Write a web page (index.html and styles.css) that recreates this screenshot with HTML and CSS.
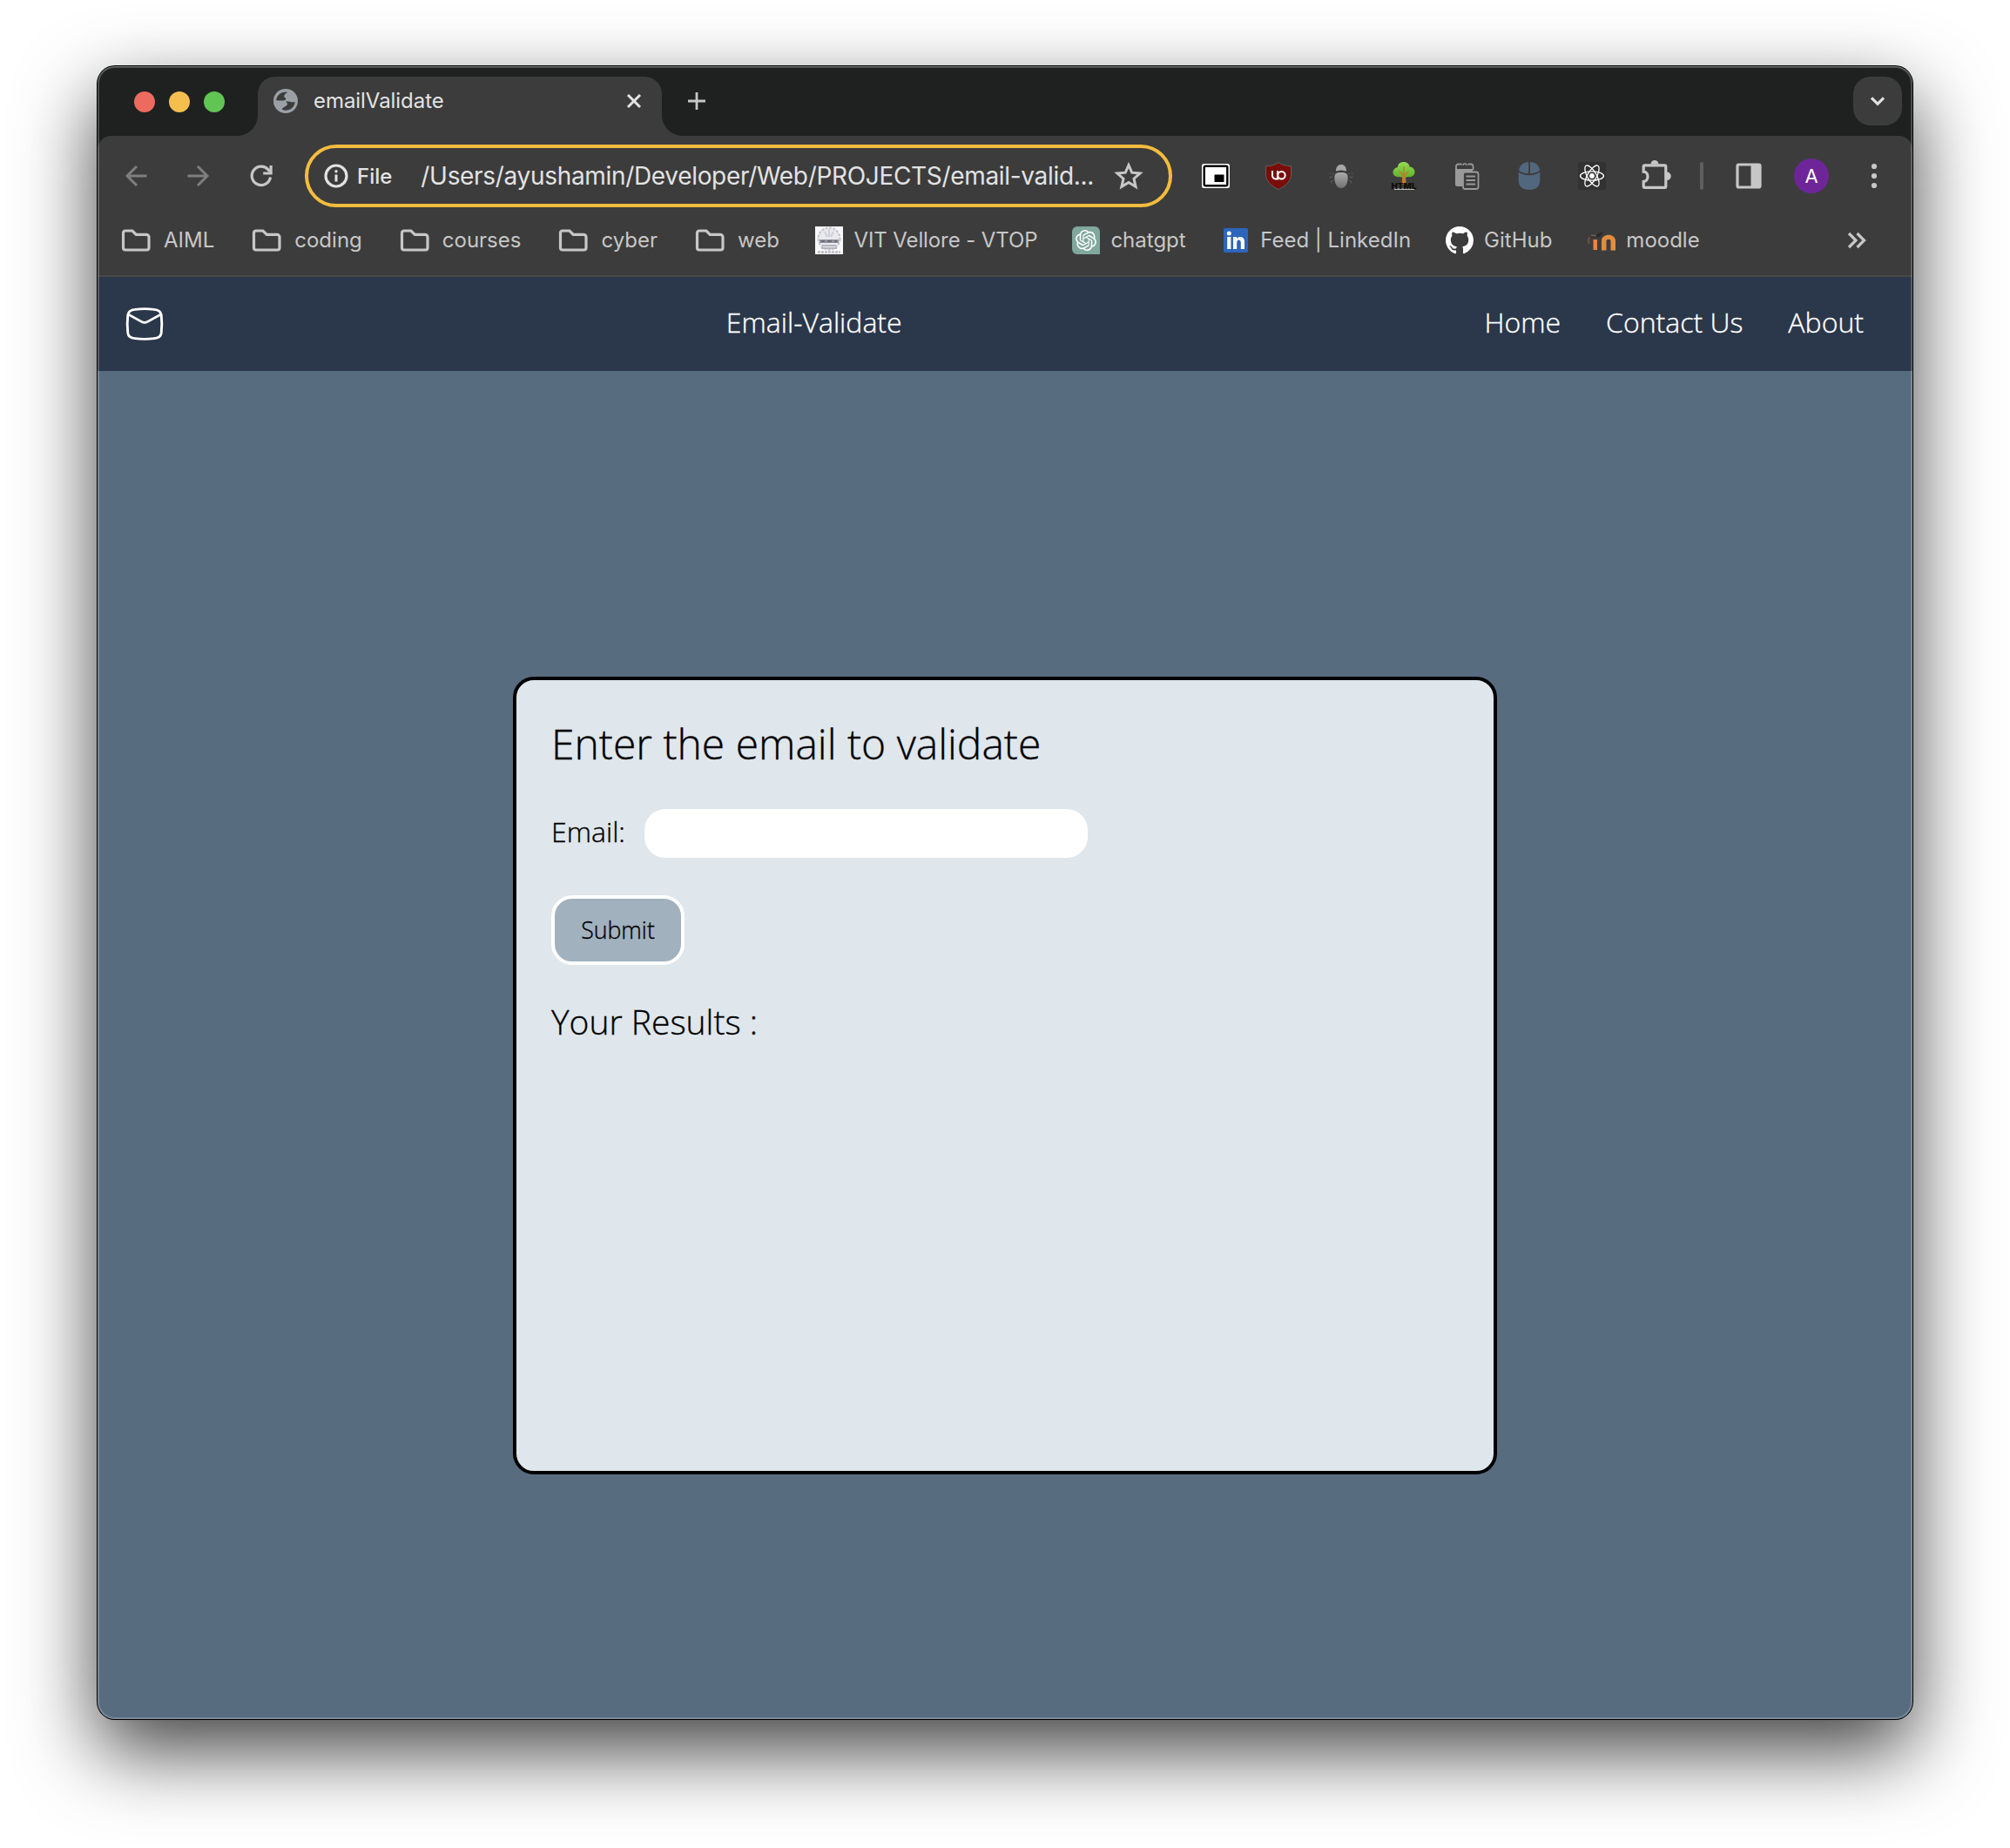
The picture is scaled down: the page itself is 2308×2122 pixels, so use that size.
FILE: index.html
```html
<!DOCTYPE html>
<html lang="en">
<head>
<meta charset="utf-8">
<title>emailValidate</title>
<link rel="stylesheet" href="styles.css">
</head>
<body>
<svg width="0" height="0" class="defs" aria-hidden="true">
  <symbol id="folder" viewBox="0 0 40 32">
    <path d="M8 5h8l4.300 4.300H32a3 3 0 0 1 3 3V24.500a2.500 2.500 0 0 1-2.500 2.500H8a2.500 2.500 0 0 1-2.500-2.500V7.500A2.500 2.500 0 0 1 8 5z" fill="none" stroke="#c7c7c7" stroke-width="3.200"/>
  </symbol>
</svg>
<div class="window">
  <div class="tabstrip">
    <div class="lights"><i class="light red"></i><i class="light yellow"></i><i class="light green"></i></div>
    <div class="tab">
      <svg class="globe" width="28" height="28" viewBox="0 0 28 28"><circle cx="14" cy="14" r="14" fill="#9aa0a6"/><path d="M3.200 13.200C3.600 7.500 8 3.300 15.800 3.400C15.200 5.600 12.200 5.600 12.200 8.500C12.200 10.200 14.200 9.500 14.200 11.500C14.200 13.400 12 13.400 9 13.500Z" fill="#3c3c3c"/><path d="M24.800 15C24 20.800 20 24.800 13.500 24.800C10.500 24.500 10 23.800 10 22.500L13 20.500C16.500 19 17 17 14 14.300L19 14.800C21 15.800 23 15.200 24.800 15Z" fill="#3c3c3c"/></svg>
      <span class="tab-title">emailValidate</span>
      <svg class="tab-close" width="24" height="24" viewBox="0 0 24 24"><path d="M5 5l14 14M19 5L5 19" stroke="#e3e3e3" stroke-width="3"/></svg>
    </div>
    <svg class="new-tab" width="20" height="20" viewBox="0 0 20 20"><path d="M10 0v20M0 10h20" stroke="#c7c7c7" stroke-width="2.800"/></svg>
    <div class="tab-search"><svg width="20" height="20" viewBox="0 0 20 20"><path d="M3 6.300l7 7 7-7" fill="none" stroke="#e3e3e3" stroke-width="3.200"/></svg></div>
  </div>
  <div class="chrome">
    <div class="toolbar">
      <div class="nav">
        <svg width="32" height="32" viewBox="0 0 32 32"><path d="M28.500 16H6M17 5L6 16l11 11" fill="none" stroke="#7e7e7e" stroke-width="3"/></svg>
        <svg width="32" height="32" viewBox="0 0 32 32"><path d="M3.500 16H26M15 5l11 11-11 11" fill="none" stroke="#7e7e7e" stroke-width="3"/></svg>
        <svg width="32" height="32" viewBox="0 0 32 32"><path d="M26.500 17.500A10.700 10.700 0 1 1 23.800 8.600L26 11" fill="none" stroke="#c7c7c7" stroke-width="3.200"/><path d="M28.700 4v10.500H18.200v-3h7.300V4z" fill="#c7c7c7"/></svg>
      </div>
      <div class="omnibox">
        <svg width="28" height="28" viewBox="0 0 28 28"><circle cx="14" cy="14" r="12" fill="none" stroke="#e3e3e3" stroke-width="3.200"/><path d="M14 12.500v8" stroke="#e3e3e3" stroke-width="3"/><circle cx="14" cy="8.800" r="1.700" fill="#e3e3e3"/></svg>
        <span class="scheme">File</span>
        <span class="url">/Users/ayushamin/Developer/Web/PROJECTS/email-valid...</span>
        <svg class="star" width="36" height="36" viewBox="0 0 36 36"><path d="M18 5.500l3.700 8.700 9.400.8-7.100 6.200 2.100 9.200-8.100-4.900-8.100 4.900L12 21.200 4.900 15l9.400-.8z" fill="none" stroke="#c7c7c7" stroke-width="3"/></svg>
      </div>
      <div class="actions">
        <svg width="32" height="32" viewBox="0 0 32 32"><rect x="0" y="2" width="32" height="28" rx="2.500" fill="#fff"/><rect x="2.700" y="4.700" width="26.600" height="22.600" rx="1.500" fill="#fff" stroke="#000" stroke-width="2.400"/><rect x="14.500" y="14.500" width="11" height="8.500" fill="#000"/></svg>
        <svg width="32" height="32" viewBox="0 0 32 32"><path d="M16 .5C12 3.500 6.500 4.800 1.500 4.800V14c0 8 5.500 13 14.500 17.500C25 27 30.500 22 30.500 14V4.800C25.500 4.800 20 3.500 16 .5z" fill="#790d0a" stroke="#6a6a6a" stroke-width=".8"/><path d="M9 10v5.800a3.600 3.600 0 0 0 3.600 3.600h2.400V10" fill="none" stroke="#fff" stroke-width="2"/><circle cx="19.500" cy="15.200" r="4.200" fill="none" stroke="#fff" stroke-width="2"/></svg>
        <svg width="32" height="32" viewBox="0 0 32 32"><defs><linearGradient id="bug" x1="0" y1="0" x2="0" y2="1"><stop offset="0" stop-color="#aaa"/><stop offset="1" stop-color="#737373"/></linearGradient></defs><path d="M8 14l-2-.8M3.500 12.500v1.500M6 17.500H2.500M7 21l-2.500 1.500v2M24 14l2-.8M28.500 12.500v1.500M26 17.500h3.500M25 21l2.500 1.500v2" fill="none" stroke="#595959" stroke-width="1.300"/><path d="M10 10.500C10 5.500 12.500 3 16 3s6 2.500 6 7.500L16 9.500z" fill="#a6a6a6"/><path d="M8.300 18c0-4.500 2.200-6 7.700-6s7.700 1.500 7.700 6c0 6.500-3 12-7.700 12s-7.700-5.500-7.700-12z" fill="url(#bug)"/></svg>
        <svg width="32" height="32" viewBox="0 0 32 32"><defs><linearGradient id="leaf" x1="0" y1="0" x2="0" y2="1"><stop offset="0" stop-color="#93dc52"/><stop offset="1" stop-color="#62b02c"/></linearGradient></defs><path d="M9 6C9 2 12 0 15.500 0 20 0 22.500 2.500 22.500 5.500 26 5.500 28.500 8.500 28.500 11.500c0 4-4 6.500-7.500 5.500-3 1.500-7 1.500-9.500 0C7 18 3.500 15.500 3.500 12c0-3 2.500-5.500 5.500-6z" fill="url(#leaf)"/><path d="M16 5v9M10.500 10.500L16 16l5.500-5.500" fill="none" stroke="#b5822f" stroke-width="1.400"/><path d="M14.700 13h2.800l1.300 13h-5.400z" fill="#c17d2c"/><rect x="5" y="30.500" width="23" height="1.500" fill="#b9b9b9"/><text x="1.500" y="30.700" class="tree-label" textLength="29" lengthAdjust="spacingAndGlyphs">HTML</text></svg>
        <svg width="32" height="32" viewBox="0 0 32 32"><path d="M3 8h20v4H12v16H5.500A2.500 2.500 0 0 1 3 25.500z" fill="#9a9a9a"/><path d="M4 9V5a2.500 2.500 0 0 1 2.500-2.500h4M17.500 2.500H21A2.500 2.500 0 0 1 23.500 5v4" fill="none" stroke="#9a9a9a" stroke-width="1.800"/><path d="M9 7V4.500h3.200a1.900 1.900 0 0 1 3.600 0h2.700V7z" fill="#3c3c3c"/><path d="M12 4a2 2 0 0 1 4 0" fill="none" stroke="#9a9a9a" stroke-width="1.500"/><rect x="12" y="11.500" width="17.500" height="19.500" rx="2.500" fill="#3c3c3c" stroke="#9a9a9a" stroke-width="1.800"/><path d="M15.500 16.500H26M15.500 21H26M15.500 25.500H26" stroke="#9a9a9a" stroke-width="2"/></svg>
        <svg width="32" height="32" viewBox="0 0 32 32"><path d="M15.200 0v13.300C10.500 13.300 6.500 12 4 9.500 5 3.500 9.500.3 15.200 0zM17 0v13.300C21.700 13.300 25.700 12 28.200 9.500 27.200 3.500 22.700.3 17 0zM3.700 11.500C7 14 11 15.200 16 15.200S25 14 28.300 11.500V21c0 7-4.300 11-12.300 11S3.700 28 3.700 21z" fill="#51677d"/></svg>
        <svg width="32" height="32" viewBox="0 0 32 32"><rect width="32" height="32" rx="2.500" fill="#323232"/><g fill="none" stroke="#fff" stroke-width="1.300"><ellipse cx="16" cy="16" rx="13.500" ry="5.200"/><ellipse cx="16" cy="16" rx="13.500" ry="5.200" transform="rotate(60 16 16)"/><ellipse cx="16" cy="16" rx="13.500" ry="5.200" transform="rotate(120 16 16)"/></g><circle cx="16" cy="16" r="2.900" fill="#fff"/></svg>
        <svg width="36" height="36" viewBox="0 0 36 36"><path d="M6.500 5.800h23a1.300 1.300 0 0 1 1.300 1.300v23a1.300 1.300 0 0 1-1.300 1.300h-23a1.300 1.300 0 0 1-1.300-1.300v-5.600c3 0 4.800-2.600 4.800-5.700s-1.800-5.700-4.800-5.700V7.100a1.300 1.300 0 0 1 1.300-1.300z" fill="none" stroke="#c7c7c7" stroke-width="3.200"/><path d="M13.500 4.500a4.500 4.500 0 0 1 9 0zM32 13.500a4.800 4.800 0 0 1 0 9.600z" fill="#c7c7c7"/></svg>
      </div>
      <i class="divider"></i>
      <svg class="side-panel" width="32" height="32" viewBox="0 0 32 32"><rect x="3" y="3" width="26" height="26" rx="1.500" fill="none" stroke="#c7c7c7" stroke-width="3.200"/><path d="M18.500 3H29v26H18.500z" fill="#c7c7c7"/></svg>
      <span class="avatar">A</span>
      <svg class="menu" width="8" height="32" viewBox="0 0 8 32"><g fill="#c7c7c7"><circle cx="4" cy="5" r="3.100"/><circle cx="4" cy="16" r="3.100"/><circle cx="4" cy="27" r="3.100"/></g></svg>
    </div>
    <div class="bookmarks">
      <span class="bookmark"><svg width="40" height="32"><use href="#folder"/></svg>AIML</span>
      <span class="bookmark"><svg width="40" height="32"><use href="#folder"/></svg>coding</span>
      <span class="bookmark"><svg width="40" height="32"><use href="#folder"/></svg>courses</span>
      <span class="bookmark"><svg width="40" height="32"><use href="#folder"/></svg>cyber</span>
      <span class="bookmark"><svg width="40" height="32"><use href="#folder"/></svg>web</span>
      <span class="bookmark vtop"><svg width="32" height="32" viewBox="0 0 32 32"><rect width="32" height="32" fill="#f8f8fa"/><circle cx="16" cy="14" r="12.500" fill="#e9e9ee" stroke="#c3c3cc" stroke-width="2" stroke-dasharray="3 1.500"/><path d="M16 3v9M11 6l3 6M21 6l-3 6" stroke="#d0d0d8" stroke-width="2"/><rect x="5" y="15" width="22" height="4" fill="#92929c"/><path d="M7 17h4M14 17h5M22 17h3" stroke="#6d6d7b" stroke-width="2"/><path d="M8 22h16M7 25h18" stroke="#b5b5c0" stroke-width="2"/><path d="M3 29.500h26" stroke="#c3c3cc" stroke-width="3" stroke-dasharray="3 1"/></svg>VIT Vellore - VTOP</span>
      <span class="bookmark"><svg width="32" height="32" viewBox="0 0 32 32"><path d="M6 0h20a6 6 0 0 1 6 6v26H6a6 6 0 0 1-6-6V6a6 6 0 0 1 6-6z" fill="#80a89d"/><g transform="translate(4 4)"><path fill="#fff" d="M22.2819 9.8211a5.9847 5.9847 0 0 0-.5157-4.9108 6.0462 6.0462 0 0 0-6.5098-2.9A6.0651 6.0651 0 0 0 4.9807 4.1818a5.9847 5.9847 0 0 0-3.9977 2.9 6.0462 6.0462 0 0 0 .7427 7.0966 5.98 5.98 0 0 0 .511 4.9107 6.051 6.051 0 0 0 6.5146 2.9001A5.9847 5.9847 0 0 0 13.2599 24a6.0557 6.0557 0 0 0 5.7718-4.2058 5.9894 5.9894 0 0 0 3.9977-2.9001 6.0557 6.0557 0 0 0-.7475-7.0729zm-9.022 12.6081a4.4755 4.4755 0 0 1-2.8764-1.0408l.1419-.0804 4.7783-2.7582a.7948.7948 0 0 0 .3927-.6813v-6.7369l2.02 1.1686a.071.071 0 0 1 .038.052v5.5826a4.504 4.504 0 0 1-4.4945 4.4944zm-9.6607-4.1254a4.4708 4.4708 0 0 1-.5346-3.0137l.142.0852 4.783 2.7582a.7712.7712 0 0 0 .7806 0l5.8428-3.3685v2.3324a.0804.0804 0 0 1-.0332.0615L9.74 19.9502a4.4992 4.4992 0 0 1-6.1408-1.6464zM2.3408 7.8956a4.485 4.485 0 0 1 2.3655-1.9728V11.6a.7664.7664 0 0 0 .3879.6765l5.8144 3.3543-2.0201 1.1685a.0757.0757 0 0 1-.071 0l-4.8303-2.7865A4.504 4.504 0 0 1 2.3408 7.872zm16.5963 3.8558L13.1038 8.364 15.1192 7.2a.0757.0757 0 0 1 .071 0l4.8303 2.7913a4.4944 4.4944 0 0 1-.6765 8.1042v-5.6772a.79.79 0 0 0-.407-.667zm2.0107-3.0231l-.142-.0852-4.7735-2.7818a.7759.7759 0 0 0-.7854 0L9.409 9.2297V6.8974a.0662.0662 0 0 1 .0284-.0615l4.8303-2.7866a4.4992 4.4992 0 0 1 6.6802 4.66zM8.3065 12.863l-2.02-1.1638a.0804.0804 0 0 1-.038-.0567V6.0742a4.4992 4.4992 0 0 1 7.3757-3.4537l-.142.0805L8.704 5.459a.7948.7948 0 0 0-.3927.6813zm1.0976-2.3654l2.602-1.4998 2.6069 1.4998v2.9994l-2.5974 1.4997-2.6067-1.4997Z"/></g></svg>chatgpt</span>
      <span class="bookmark linkedin"><svg width="32" height="32" viewBox="0 0 32 32"><rect x="2" y="2" width="28" height="28" rx="1.500" fill="#2d65bc"/><circle cx="8.300" cy="8" r="2.500" fill="#fff"/><rect x="6.200" y="12" width="4.200" height="14" fill="#fff"/><path d="M13 12h4v2c2-3.200 9-3.200 9 3.500V26h-4.200v-7.500c0-4-4.600-3.800-4.600 0V26H13z" fill="#fff"/></svg>Feed | LinkedIn</span>
      <span class="bookmark"><svg width="32" height="32" viewBox="0 0 16 16"><path fill="#fff" d="M8 0C3.580 0 0 3.580 0 8c0 3.540 2.290 6.530 5.470 7.590.4.070.55-.17.55-.38 0-.19-.01-.82-.01-1.490-2.010.37-2.530-.49-2.690-.94-.09-.23-.48-.94-.82-1.130-.28-.15-.68-.52-.01-.53.63-.01 1.080.58 1.230.82.72 1.210 1.870.87 2.330.66.07-.52.28-.87.51-1.070-1.780-.2-3.640-.89-3.640-3.950 0-.87.31-1.590.82-2.150-.08-.2-.36-1.020.08-2.120 0 0 .67-.21 2.200.82.64-.18 1.320-.27 2-.27s1.360.09 2 .27c1.530-1.040 2.200-.82 2.200-.82.44 1.100.16 1.920.08 2.120.51.56.82 1.270.82 2.150 0 3.070-1.870 3.750-3.650 3.950.29.25.54.73.54 1.480 0 1.070-.01 1.930-.01 2.200 0 .21.15.46.55.38A8.010 8.010 0 0 0 16 8c0-4.420-3.580-8-8-8z"/></svg>GitHub</span>
      <span class="bookmark moodle"><svg width="32" height="32" viewBox="0 0 32 32"><path d="M2 12l12-4.500 4-1-4 5.500-9 1z" fill="#2a2a2a"/><path d="M2 20c-1.500-3-1-6 .5-8" fill="none" stroke="#6b4d40" stroke-width="2.500"/><path d="M4 10.500h6" stroke="#6b5b52" stroke-width="2"/><path d="M6.500 15H11v12H6.500z" fill="#e98444"/><path d="M16 27.500V16.500c0-9 16-9 16 0v11h-5.500V17c0-3-5-3-5 0v10.500z" fill="#e08d3f"/></svg>moodle</span>
      <svg class="overflow" width="24" height="24" viewBox="0 0 24 24"><path d="M3 4l8 8-8 8M12.500 4l8 8-8 8" fill="none" stroke="#c7c7c7" stroke-width="3.200"/></svg>
    </div>
  </div>
  <header class="site-header">
    <svg width="44" height="38" viewBox="0 0 44 40" preserveAspectRatio="none"><path d="M11 2.500C17 1.700 27 1.700 33 2.500C38 3 40.500 4.500 41.200 9C42 16 42 24 41.200 31C40.500 35.500 38 37 33 37.500C27 38.300 17 38.300 11 37.500C6 37 3.500 35.500 2.800 31C2 24 2 16 2.800 9C3.500 4.500 6 3 11 2.500ZM3.500 8.500L18.500 17.200Q22 19.300 25.500 17.200L40.500 8.500" fill="none" stroke="#fff" stroke-width="2.900" stroke-linejoin="round"/></svg>
    <div class="brand">Email-Validate</div>
    <nav class="links"><a>Home</a><a>Contact Us</a><a>About</a></nav>
  </header>
  <main class="page">
    <section class="card">
      <h1>Enter the email to validate</h1>
      <div class="field"><label for="email">Email:</label><input id="email" type="text"></div>
      <button type="button">Submit</button>
      <h2>Your Results :</h2>
    </section>
  </main>
</div>
</body>
</html>
```
FILE: styles.css
```css
* { box-sizing: border-box; }

body {
  margin: 0;
  height: 2122px;
  padding: 76px 112px 148px;
  background: #fff;
  overflow: hidden;
  font-family: "Open Sans", sans-serif;
}

svg { display: block; flex: none; overflow: visible; }
.defs { position: absolute; }

.window {
  position: relative;
  display: flex;
  flex-direction: column;
  width: 2084px;
  height: 1898px;
  border-radius: 20px;
  overflow: hidden;
  background: #586c80;
  box-shadow: 0 0 0 1px #000, 0 36px 90px rgba(0, 0, 0, .75);
}

/* light rim along the inside edge of the window */
.window::after {
  content: "";
  position: absolute;
  inset: 0;
  border-radius: 20px;
  box-shadow: inset 0 0 0 2px rgba(255, 255, 255, .2), inset 0 1px 0 rgba(255, 255, 255, .2);
  pointer-events: none;
}

/* Tab strip */
.tabstrip {
  display: flex;
  align-items: center;
  flex: none;
  height: 80px;
  padding: 0 12px 0 42px;
  background: #1f2120;
  font-family: Inter, sans-serif;
}

.lights { display: flex; gap: 16px; padding-top: 2px; }
.light { width: 24px; height: 24px; border-radius: 50%; }
.red { background: #ed6a5e; }
.yellow { background: #f4bf4f; }
.green { background: #61c554; }

.tab {
  position: relative;
  display: flex;
  align-items: center;
  align-self: flex-end;
  width: 464px;
  height: 68px;
  margin-left: 38px;
  padding: 0 20px 12px 18px;
  border-radius: 20px 20px 0 0;
  background: #3c3c3c;
}

.tab::before,
.tab::after {
  content: "";
  position: absolute;
  bottom: 0;
  width: 24px;
  height: 24px;
}

.tab::before { left: -24px; background: radial-gradient(circle at 0 0, transparent 23.5px, #3c3c3c 24.5px); }
.tab::after { right: -24px; background: radial-gradient(circle at 100% 0, transparent 23.5px, #3c3c3c 24.5px); }

.tab-title { margin-left: 18px; font-size: 24px; line-height: 28px; letter-spacing: -.05px; color: #e3e3e3; }
.tab-close { margin-left: auto; }
.new-tab { margin: 0 auto 0 30px; }

.tab-search {
  display: flex;
  align-items: center;
  justify-content: center;
  width: 56px;
  height: 56px;
  border-radius: 20px;
  background: #3c3c3c;
}

/* Toolbar and bookmarks */
.chrome {
  flex: none;
  height: 162px;
  border-bottom: 2px solid #484848;
  background: radial-gradient(circle at 16px 16px, #3c3c3c 15.5px, #1f2120 16.5px) 0 0 / 16px 16px no-repeat,
              radial-gradient(circle at 0 16px, #3c3c3c 15.5px, #1f2120 16.5px) 100% 0 / 16px 16px no-repeat,
              #3c3c3c;
  font-family: Inter, sans-serif;
}

.toolbar { display: flex; align-items: center; height: 92px; padding-left: 28px; }
.nav { display: flex; gap: 40px; margin-right: 34px; }

.omnibox {
  display: flex;
  align-items: center;
  width: 996px;
  height: 72px;
  padding: 0 28px 0 18px;
  border: 4px solid #f3bc3f;
  border-radius: 36px;
  color: #e3e3e3;
}

.scheme { margin-left: 10px; font-size: 24px; font-weight: 500; }
.url { margin-left: 33px; font-size: 28px; letter-spacing: -.32px; white-space: nowrap; }
.star { margin-left: auto; }

.actions { display: flex; align-items: center; gap: 40px; margin-left: 34px; }
.actions svg:last-child { margin: 0 -2px; }
.tree-label { font: 900 9.5px Inter, sans-serif; fill: #120d0a; }

.divider { width: 4px; height: 32px; margin: 0 36px; border-radius: 2px; background: #5f5f5f; }

.avatar {
  width: 40px;
  height: 40px;
  margin: 0 48px 0 36px;
  border-radius: 50%;
  background: #6e2599;
  color: #fff;
  font-size: 22px;
  line-height: 41px;
  text-align: center;
}

.bookmarks {
  display: flex;
  align-items: center;
  gap: 40px;
  height: 54px;
  padding: 0 52px 0 24px;
  font-size: 24px;
  color: #c7c7c7;
}

.bookmarks svg { margin: 1px 0 -1px; }
.bookmark { display: flex; align-items: center; gap: 12px; white-space: nowrap; }
.vtop { margin-left: 1.5px; letter-spacing: -.1px; }
.linkedin { margin-left: 1.5px; }
.moodle { margin-left: 1px; }
.bookmarks .overflow { margin-left: auto; }

/* Site header */
.site-header {
  display: flex;
  align-items: center;
  justify-content: space-between;
  flex: none;
  height: 108px;
  padding: 0 56px 0 32px;
  background: #2b374a;
  color: #fff;
  font-size: 32px;
  font-weight: 300;
  line-height: 44px;
  -webkit-text-stroke: .35px currentColor;
}

.brand { margin-left: -23px; padding-bottom: 4px; }
.links { display: flex; gap: 52px; padding-bottom: 4px; }

/* Form card */
.page { padding: 351px 0 0 477px; }

.card {
  width: 1130px;
  height: 916px;
  padding: 40px;
  border: 4px solid #000;
  border-radius: 24px;
  background: #dfe6ec;
  color: #000;
  -webkit-text-stroke: .35px currentColor;
}

h1, h2 { margin: 0; font-weight: 300; }
h1 { font-size: 48px; line-height: 66px; }
.field { display: flex; align-items: center; gap: 22px; margin-top: 42px; font-size: 32px; font-weight: 300; line-height: 44px; }
label { padding-bottom: 4px; }

input {
  width: 509px;
  height: 56px;
  border: 0;
  border-radius: 24px;
  background: #fff;
}

button {
  display: block;
  width: 153px;
  height: 80px;
  margin-top: 43px;
  padding: 0;
  border: 4px solid #fff;
  border-radius: 24px;
  background: #a1b1be;
  color: #000;
  font: 300 26.667px/36px "Open Sans", sans-serif;
}

h2 { margin-top: 38px; font-size: 39px; line-height: 54px; }
```
